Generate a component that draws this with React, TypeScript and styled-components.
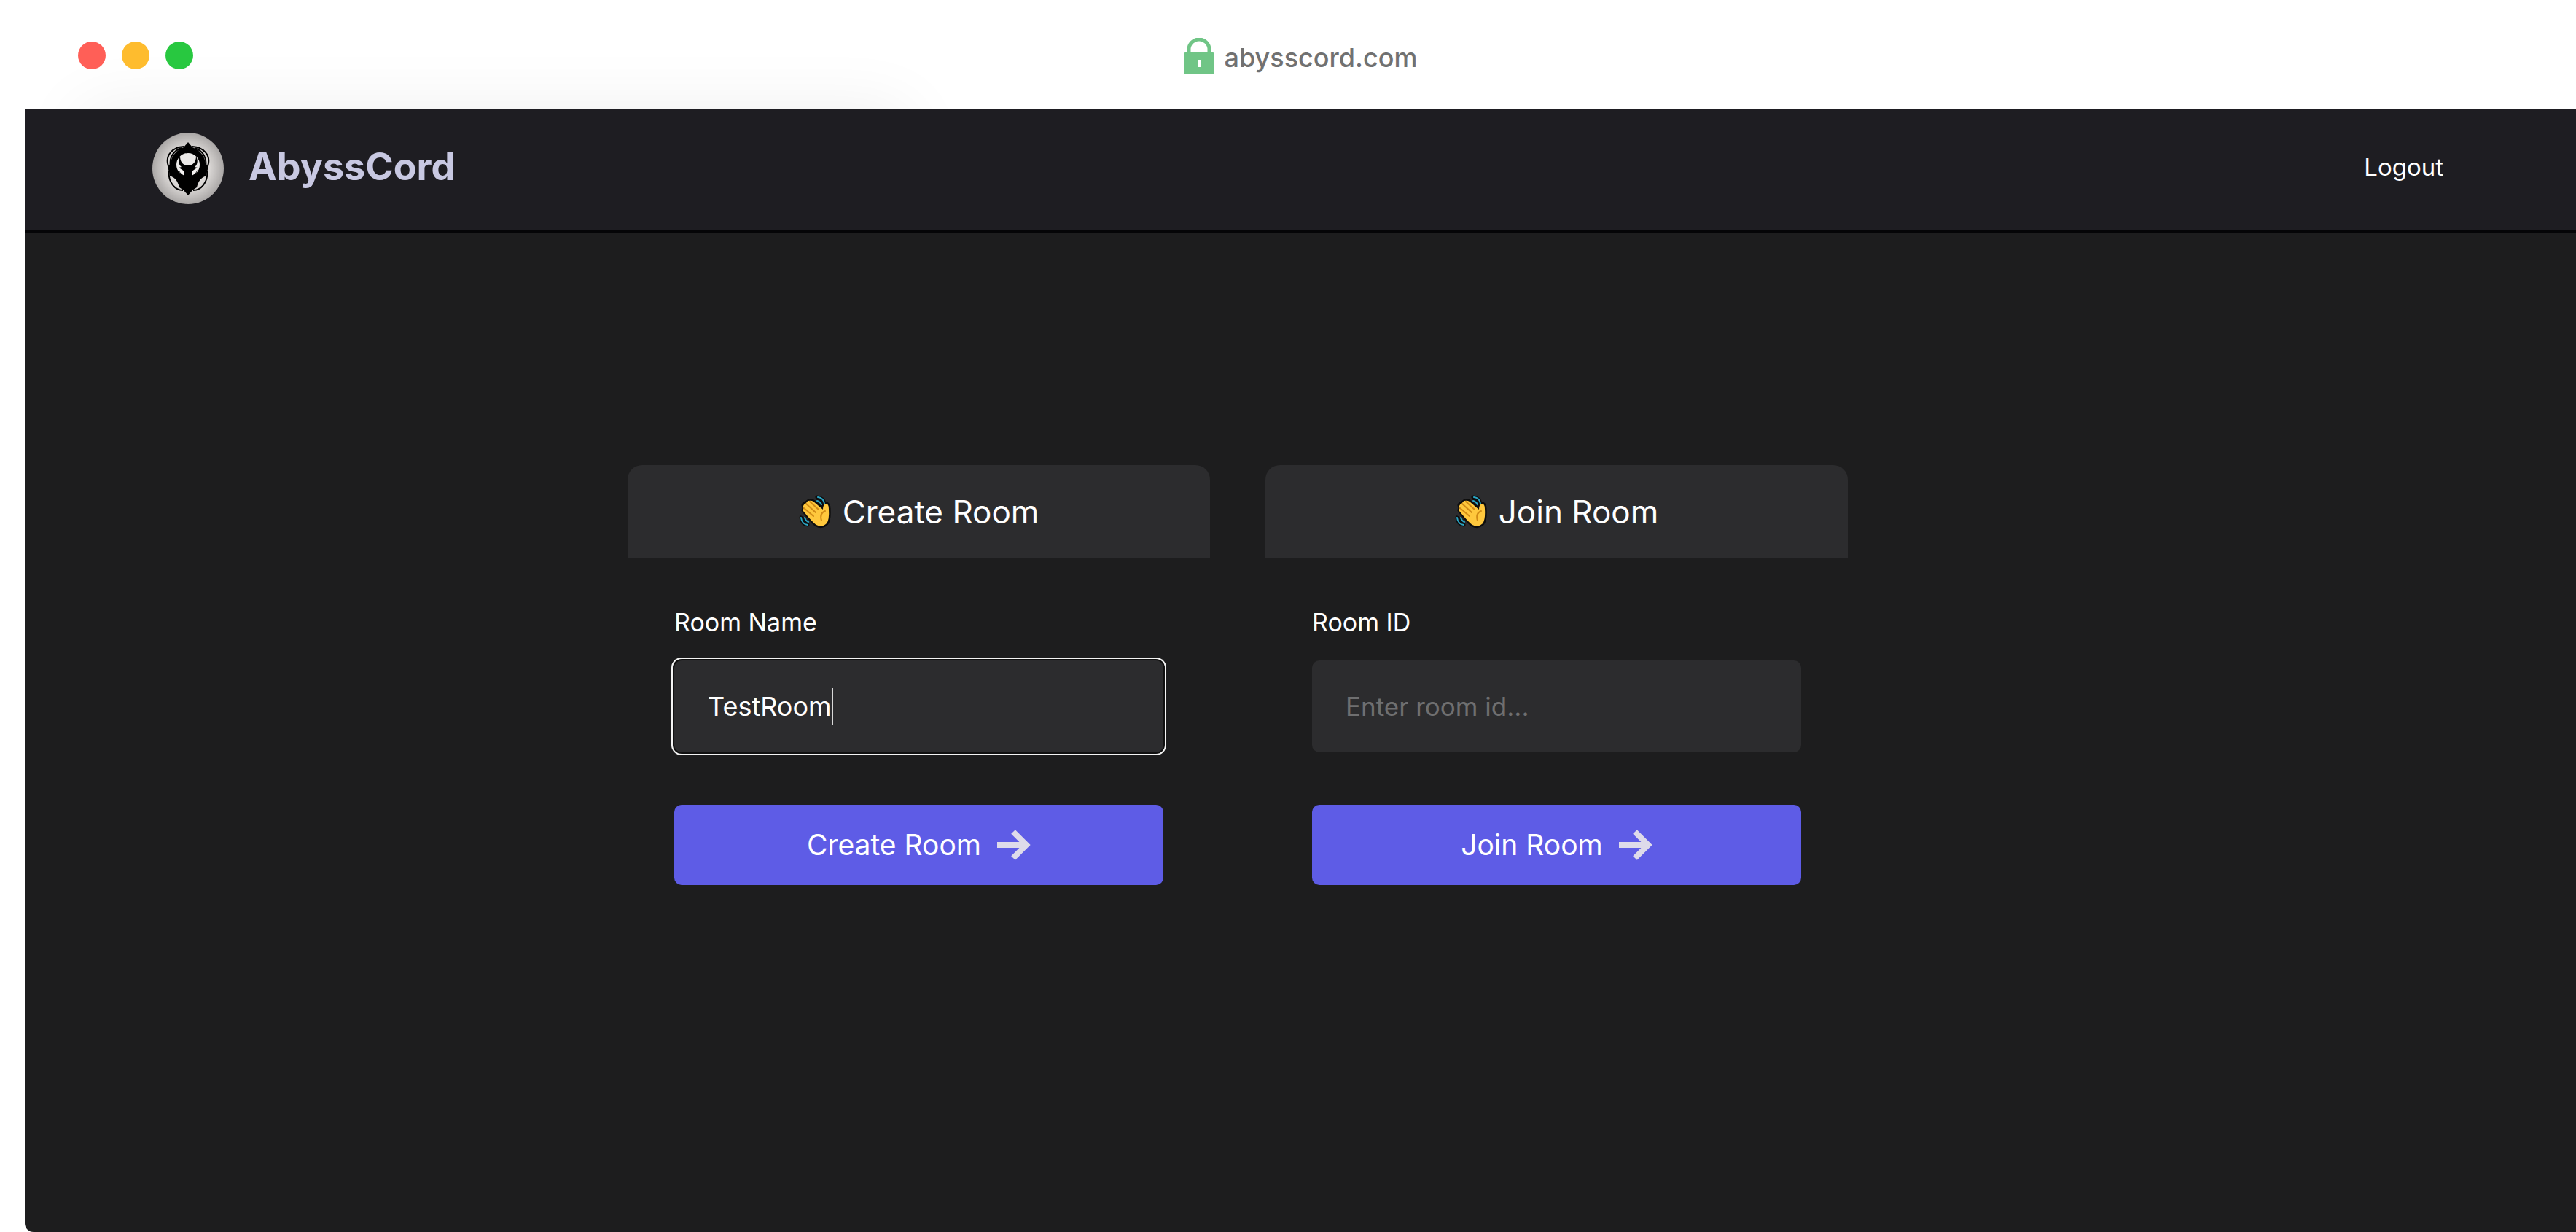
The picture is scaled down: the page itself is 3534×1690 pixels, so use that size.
import React, { useId, useState } from "react";
import styled, { createGlobalStyle } from "styled-components";

const GlobalStyle = createGlobalStyle`
  *, *::before, *::after { box-sizing: border-box; }
  body { margin: 0; background: #ffffff; }
  button, input { font: inherit; }
`;

const Browser = styled.div`
  min-height: 100vh;
  padding-left: 34px;
  display: flex;
  flex-direction: column;
  overflow: hidden;
  font-family: Inter, "Liberation Sans", sans-serif;
  color: #ffffff;
`;

const TitleBar = styled.header`
  position: relative;
  height: 149px;
  display: grid;
  grid-template-columns: 1fr auto 1fr;
  align-items: start;

  /* soft shadow cast upward by the page */
  &::before {
    content: "";
    position: absolute;
    z-index: -1;
    top: 100%;
    left: 76px;
    width: 1135px;
    height: 200px;
    box-shadow: 0 0 95px rgba(0, 0, 0, 0.065);
  }
`;

const WindowControls = styled.div`
  display: flex;
  gap: 22px;
  padding: 57px 0 0 73px;
`;

const Dot = styled.span<{ $color: string }>`
  width: 38px;
  height: 38px;
  border-radius: 50%;
  background: ${(p) => p.$color};
`;

const Address = styled.div`
  display: flex;
  align-items: flex-end;
  gap: 14px;
  padding-top: 52px;
  font-size: 36px;
  line-height: 46px;
  font-weight: 500;
  color: #717171;
`;

const Page = styled.div`
  flex: 1;
  display: flex;
  flex-direction: column;
  background: #1d1d1e;
  border-radius: 0 0 0 12px;
`;

const NavBar = styled.nav`
  display: flex;
  align-items: center;
  justify-content: space-between;
  height: 170px;
  padding: 0 182px 4px 175px;
  background: #1e1d22;
  border-bottom: 3px solid #050507;
`;

const Brand = styled.a`
  display: flex;
  align-items: flex-start;
  gap: 34px;
  color: #c8c8e2;
  font-size: 52px;
  line-height: 94px;
  font-weight: 700;
  text-decoration: none;
`;

const LogoutButton = styled.button`
  padding: 0 0 4px;
  border: 0;
  background: none;
  color: #ffffff;
  font-size: 33px;
  line-height: 48px;
  cursor: pointer;
`;

const Rooms = styled.main`
  display: flex;
  justify-content: center;
  gap: 76px;
  padding: 319px 172px 96px 0;
`;

const Card = styled.section`
  width: 799px;
`;

const CardTitle = styled.h2`
  display: flex;
  align-items: center;
  justify-content: center;
  gap: 14px;
  height: 128px;
  margin: 0;
  border-radius: 20px 20px 0 0;
  background: #2c2c2e;
  font-size: 44px;
  line-height: 60px;
  font-weight: 400;
`;

const Form = styled.form`
  display: flex;
  flex-direction: column;
  padding: 64px;
`;

const Label = styled.label`
  margin-bottom: 28px;
  font-size: 34px;
  line-height: 48px;
`;

const Field = styled.div`
  position: relative;
  display: flex;
`;

const TextInput = styled.input<{ $active: boolean }>`
  width: 100%;
  height: 126px;
  padding: 0 46px;
  border: 0;
  border-radius: 10px;
  outline: none;
  background: #2c2c2e;
  color: #ffffff;
  font-size: 36px;
  box-shadow: ${(p) => (p.$active ? "0 0 0 2px #101010, 0 0 0 4px #f4f4f4" : "none")};

  &::placeholder { color: #6f6f70; opacity: 1; font-size: 35px; }
`;

const Caret = styled.span`
  position: absolute;
  left: 216px;
  top: 38px;
  width: 2px;
  height: 50px;
  background: #d8d8d8;
`;

const SubmitButton = styled.button`
  display: flex;
  align-items: center;
  justify-content: center;
  gap: 22px;
  height: 110px;
  margin-top: 72px;
  border: 0;
  border-radius: 10px;
  background: #5e5ce6;
  color: #ffffff;
  font-size: 39px;
  line-height: 54px;
  cursor: pointer;
`;

const LockIcon = () => (
  <svg width="42" height="50" viewBox="0 0 42 50" aria-hidden="true">
    <path d="M7 22V16a14 14 0 0 1 28 0v6" fill="none" stroke="#70c586" strokeWidth="5" />
    <path fillRule="evenodd" fill="#70c586" d="M2 20h38a2 2 0 0 1 2 2v26a2 2 0 0 1-2 2H2a2 2 0 0 1-2-2V22a2 2 0 0 1 2-2zM19 30v10h4V30z" />
  </svg>
);

const Logo = () => (
  <svg width="98" height="98" viewBox="0 0 98 98" aria-hidden="true">
    <defs>
      <radialGradient id="disc">
        <stop offset="0" stopColor="#f2f0ef" />
        <stop offset="0.6" stopColor="#d9d6d4" />
        <stop offset="1" stopColor="#aaa7a6" />
      </radialGradient>
    </defs>
    <circle cx="49" cy="49" r="49" fill="url(#disc)" />
    <g fill="none" stroke="#000" strokeWidth="2">
      <path d="M43 19C28 20 19 30 21 42L24 54M55 19C70 20 79 30 77 42L74 54" />
      <path d="M40 21C28 25 23 35 25 46M58 21C70 25 75 35 73 46" />
      <path d="M23 52C21 66 30 79 42 79M75 52C77 66 68 79 56 79" />
    </g>
    {/* outer body */}
    <path fill="#000" d="M49 13l6 7c10 4 17 12 18 22l3 4-2 13c-8 3-11 8-13 16l-6 4-6 7-6-7-6-4c-2-8-5-13-13-16l-2-13 3-4c1-10 8-18 18-22z" />
    {/* light ring between the body and the horned head */}
    <circle cx="49" cy="44" r="16" fill="#ebe9e8" />
    <path fill="#000" d="M38 32c-3 7-2 12 2 15l-4 1 3 14h20l3-14-4-1c4-3 5-8 2-15 0 8-4 13-11 13s-11-5-11-13z" />
    <path fill="#f4f2f1" d="M35 47l9 6v6q-7-3-9-12zM63 47l-9 6v6q7-3 9-12z" />
  </svg>
);

const WaveIcon = () => (
  <svg width="46" height="46" viewBox="0 0 46 46" aria-hidden="true">
    <g stroke="#0d0d0d" strokeWidth="5" strokeLinejoin="round" strokeLinecap="round" fill="#0d0d0d">
      <path d="M6 14Q7 11 10 11L11 10Q13 8 15 9Q18 7 20 9L33 20Q33 13 37 12Q41 12 41 19Q42 34 38 39Q32 45 24 41Q20 39 6 21L7 18Z" />
      <path d="M25 3Q34 4 35 12L30 10ZM3 31Q4 40 12 41L11 36Z" />
    </g>
    <path fill="#ffc83d" d="M6 15Q7 12 10 12Q10 9 13 8Q17 7 20 9L33 20Q33 13 37 12Q41 12 41 19Q42 34 38 39Q32 45 24 41Q20 39 6 22Q5 20 7 18Q5 17 6 15Z" />
    <path d="M10 12L23 24M15 9L27 20M7 18L20 29M36 22Q28 25 31 35" fill="none" stroke="#d18b16" strokeWidth="2" strokeLinecap="round" />
    <path d="M26 3Q34 4 35 12M25 8Q29 9 31 13M3 31Q4 40 12 41M8 31Q9 35 13 37" fill="none" stroke="#2ba5c4" strokeWidth="2" strokeLinecap="round" />
  </svg>
);

const ArrowIcon = () => (
  <svg width="46" height="42" viewBox="0 0 46 42" aria-hidden="true">
    <path d="M0 21h40M22 3l18 18-18 18" fill="none" stroke="#dedbea" strokeWidth="8" />
  </svg>
);

interface RoomCardProps {
  title: string;
  label: string;
  placeholder: string;
  initial?: string;
  active?: boolean;
}

function RoomCard({ title, label, placeholder, initial = "", active = false }: RoomCardProps) {
  const id = useId();
  const [value, setValue] = useState(initial);
  return (
    <Card>
      <CardTitle>
        <WaveIcon />
        {title}
      </CardTitle>
      <Form onSubmit={(e) => e.preventDefault()}>
        <Label htmlFor={id}>{label}</Label>
        <Field>
          <TextInput
            id={id}
            type="text"
            $active={active}
            placeholder={placeholder}
            value={value}
            onChange={(e) => setValue(e.target.value)}
          />
          {active && value === initial && <Caret />}
        </Field>
        <SubmitButton type="submit">
          {title}
          <ArrowIcon />
        </SubmitButton>
      </Form>
    </Card>
  );
}

export default function App() {
  return (
    <>
      <GlobalStyle />
      <Browser>
        <TitleBar>
          <WindowControls>
            <Dot $color="#ff5f57" />
            <Dot $color="#febc2e" />
            <Dot $color="#28c840" />
          </WindowControls>
          <Address>
            <LockIcon />
            abysscord.com
          </Address>
        </TitleBar>
        <Page>
          <NavBar>
            <Brand href="#">
              <Logo />
              AbyssCord
            </Brand>
            <LogoutButton type="button">Logout</LogoutButton>
          </NavBar>
          <Rooms>
            <RoomCard title="Create Room" label="Room Name" placeholder="Enter room name..." initial="TestRoom" active />
            <RoomCard title="Join Room" label="Room ID" placeholder="Enter room id..." />
          </Rooms>
        </Page>
      </Browser>
    </>
  );
}
